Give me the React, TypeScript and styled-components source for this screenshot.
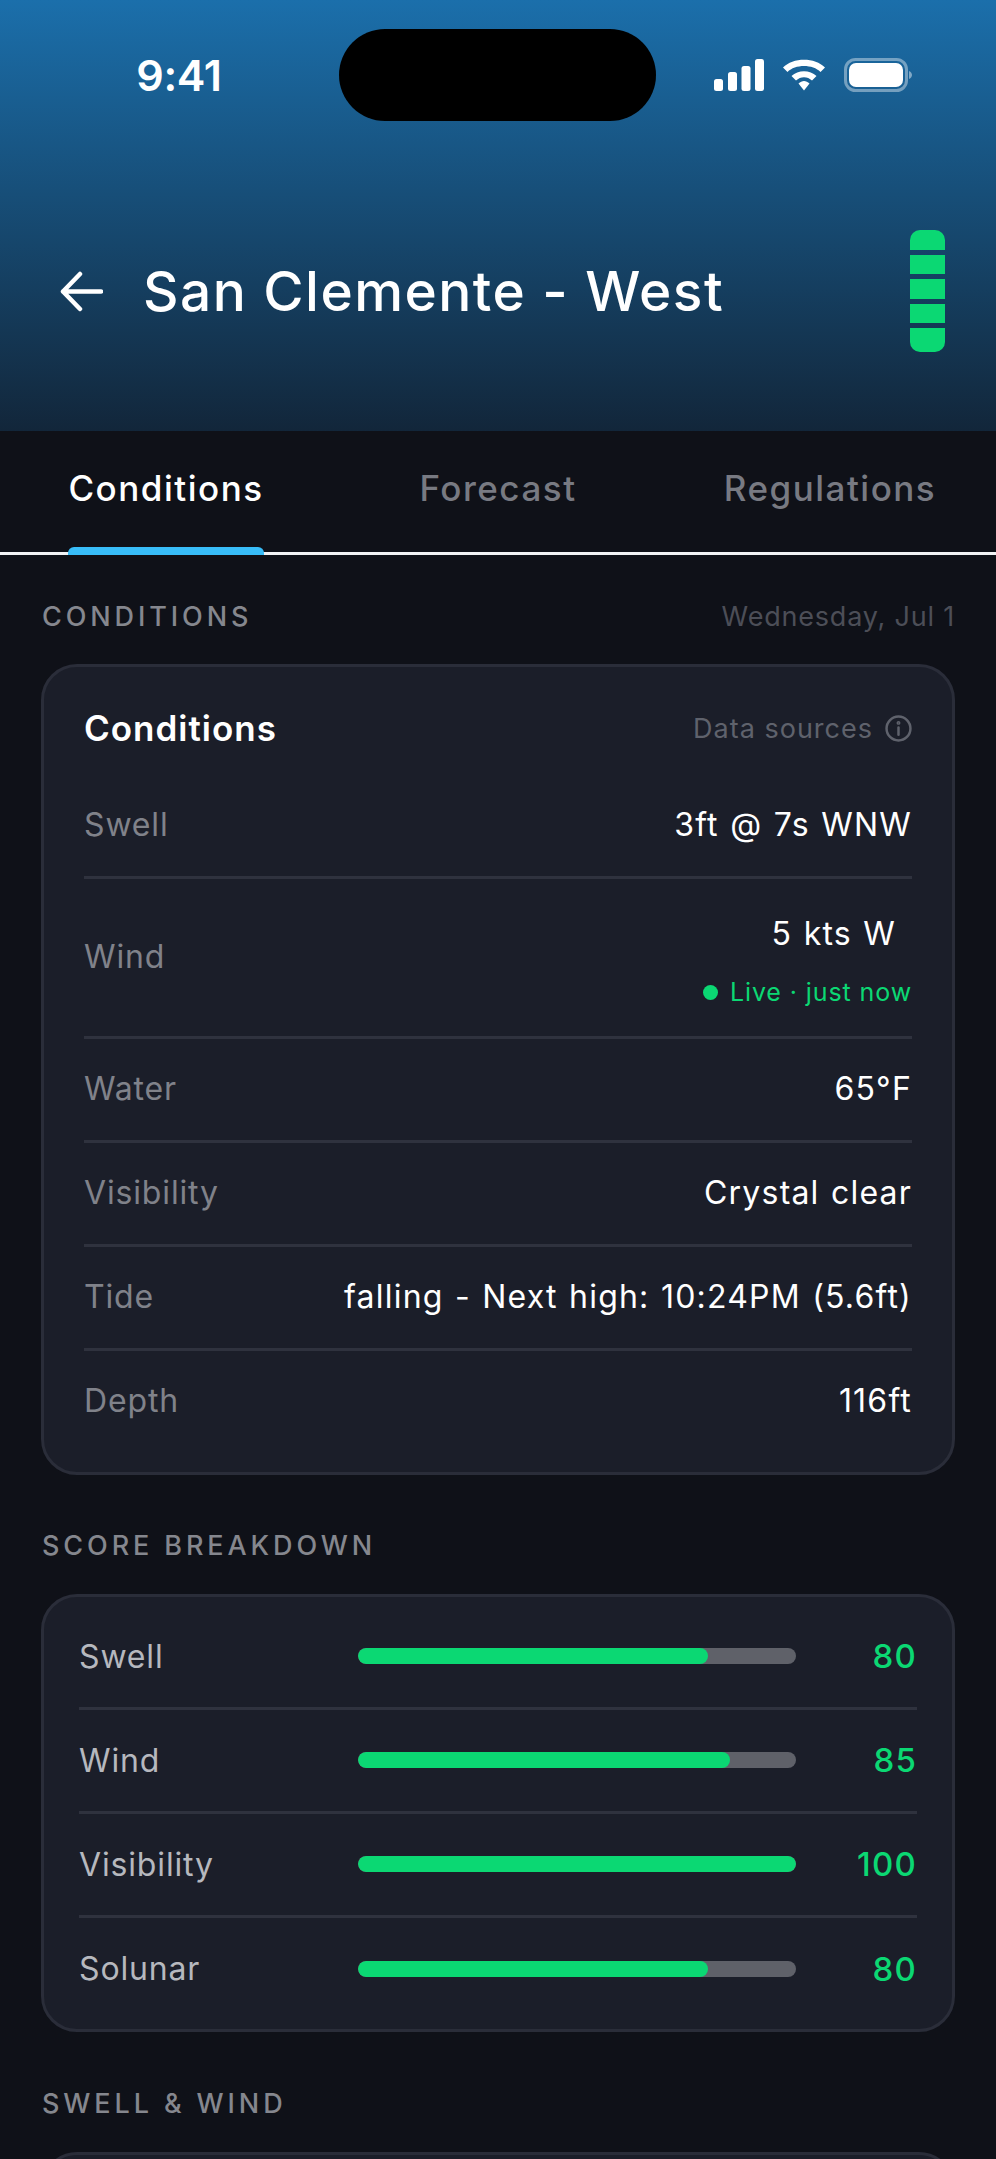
import React from "react";
import styled, { createGlobalStyle } from "styled-components";

const Global = createGlobalStyle`
  html, body { margin: 0; padding: 0; background: #0f1118; }
  * { box-sizing: border-box; }
  #root { height: 2159px; overflow: hidden; }
`;

const Page = styled.div`
  width: 996px;
  height: 2159px;
  overflow: hidden;
  background: #0f1118;
  font-family: Inter, "Liberation Sans", sans-serif;
  color: #fff;
`;

const Header = styled.header`
  height: 431px;
  padding-top: 29px;
  background: linear-gradient(180deg, #1b6fab 0%, #12263a 100%);
  display: flex;
  flex-direction: column;
`;

const StatusBar = styled.div`
  display: grid;
  grid-template-columns: 339px 317px 1fr;
  align-items: center;
  height: 92px;
`;

const Clock = styled.div`
  padding-left: 19px;
  text-align: center;
  font-size: 43px;
  font-weight: 600;
  letter-spacing: -0.3px;
`;

const Island = styled.div`
  height: 92px;
  background: #000;
  border-radius: 46px;
`;

const StatusIcons = styled.div`
  display: flex;
  align-items: center;
  padding-left: 58px;
`;

const TitleRow = styled.div`
  margin-top: 109px;
  height: 122px;
  display: flex;
  align-items: center;
  padding: 0 51px 0 60px;
`;

const BackIcon = styled.svg`
  width: 43px;
  height: 41px;
  margin-right: 40px;
  flex: none;
`;

const Title = styled.h1`
  flex: 1;
  margin: 0;
  font-size: 55px;
  font-weight: 530;
  letter-spacing: 1.45px;
`;

const ScorePill = styled.div`
  width: 35px;
  height: 122px;
  display: grid;
  grid-template-rows: 19.5px 19.5px 19.5px 19.5px 24px;
  row-gap: 5px;
  border-radius: 10px;
  overflow: hidden;
`;

const PillSegment = styled.div`
  background: #0bd873;
`;

const Tabs = styled.nav`
  height: 124px;
  display: grid;
  grid-template-columns: repeat(3, 1fr);
  border-bottom: 3px solid #f2f3f5;
  background: #0f1118;
`;

const Tab = styled.div<{ $active?: boolean }>`
  position: relative;
  justify-self: center;
  align-self: stretch;
  display: flex;
  align-items: center;
  padding-bottom: 7px;
  font-size: 35px;
  font-weight: 500;
  letter-spacing: 1.5px;
  color: ${(p) => (p.$active ? "#ffffff" : "#787a82")};

  &::after {
    content: "";
    display: ${(p) => (p.$active ? "block" : "none")};
    position: absolute;
    left: 0;
    right: 0;
    bottom: -3px;
    height: 8px;
    border-radius: 6px 6px 0 0;
    background: #38bdf8;
  }
`;

const Content = styled.main`
  padding: 0 41px;
`;

const SectionHead = styled.div<{ $h: number; $top: number }>`
  display: flex;
  justify-content: space-between;
  align-items: center;
  height: ${(p) => p.$h}px;
  padding-top: ${(p) => p.$top}px;
`;

const SectionLabel = styled.h2`
  margin: 0 0 0 1px;
  font-size: 27px;
  font-weight: 500;
  letter-spacing: 3.9px;
  color: #85878e;
`;

const SectionDate = styled.span`
  font-size: 27px;
  color: #4c4e57;
  letter-spacing: 0.8px;
`;

const Card = styled.section`
  background: #1b1e29;
  border: 3px solid #2a2d39;
  border-radius: 36px;
`;

const ConditionsCard = styled(Card)`
  height: 811px;
  padding: 0 40px;
`;

const ConditionsTop = styled.div`
  height: 108px;
  padding-top: 14px;
  display: flex;
  justify-content: space-between;
  align-items: center;
`;

const CardTitle = styled.h3`
  margin: 0;
  font-size: 35px;
  font-weight: 600;
  letter-spacing: 1px;
`;

const SourcesLink = styled.div`
  display: flex;
  align-items: center;
  gap: 12px;
  font-size: 27px;
  letter-spacing: 1px;
  color: #5f626c;
`;

const DataRow = styled.div<{ $tall?: boolean; $last?: boolean }>`
  display: flex;
  align-items: center;
  justify-content: space-between;
  height: ${(p) => (p.$tall ? 160 : 104)}px;
  padding-bottom: ${(p) => (p.$last ? 5 : 2)}px;
  border-bottom: ${(p) => (p.$last ? "none" : "3px solid #2f323e")};
`;

const RowLabel = styled.span`
  font-size: 32px;
  letter-spacing: 0.85px;
  color: #80828a;
`;

const RowValue = styled.span`
  font-size: 32px;
  font-weight: 420;
  letter-spacing: 1.2px;
  word-spacing: 1.2px;
  color: #fff;
`;

const ValueStack = styled.div`
  display: flex;
  flex-direction: column;
  align-items: flex-end;
  gap: 24px;
  margin-top: 8px;
`;

const WindValue = styled(RowValue)`
  padding-right: 16px;
`;

const LiveLine = styled.div`
  display: flex;
  align-items: center;
  gap: 12px;
  font-size: 25px;
  letter-spacing: 0.9px;
  color: #0bd873;
`;

const LiveDot = styled.span`
  width: 15px;
  height: 15px;
  border-radius: 50%;
  background: #0bd873;
`;

const ScoreCard = styled(Card)`
  height: 438px;
  padding: 9px 35px 0;
`;

const ScoreRow = styled.div<{ $last?: boolean }>`
  display: grid;
  grid-template-columns: 279px 438px 1fr;
  align-items: center;
  height: 104px;
  padding-bottom: ${(p) => (p.$last ? 3 : 1)}px;
  border-bottom: ${(p) => (p.$last ? "none" : "3px solid #2f323e")};
`;

const ScoreLabel = styled.span`
  font-size: 32px;
  letter-spacing: 0.85px;
  color: #b6b8be;
`;

const Track = styled.div`
  height: 16px;
  border-radius: 8px;
  background: #5f6169;
  overflow: hidden;
`;

const Fill = styled.div`
  height: 100%;
  border-radius: 8px;
  background: #0bd873;
`;

const ScoreValue = styled.span`
  text-align: right;
  font-size: 33px;
  font-weight: 500;
  letter-spacing: 1.2px;
  color: #0bd873;
`;

const NextCard = styled(Card)`
  height: 200px;
`;

const conditions = [
  ["Water", "65°F"],
  ["Visibility", "Crystal clear"],
  ["Tide", "falling - Next high: 10:24PM (5.6ft)"],
];

const scores = [
  { label: "Swell", value: 80 },
  { label: "Wind", value: 85 },
  { label: "Visibility", value: 100 },
  { label: "Solunar", value: 80 },
];

export default function App() {
  return (
    <Page>
      <Global />
      <Header>
        <StatusBar>
          <Clock>9:41</Clock>
          <Island />
          <StatusIcons>
            <svg width="199" height="34" viewBox="0 0 199 34" fill="#fff">
              <rect x="0" y="21" width="9" height="12" rx="2.5" />
              <rect x="14" y="14" width="9" height="19" rx="2.5" />
              <rect x="27.5" y="8" width="9" height="25" rx="2.5" />
              <rect x="41" y="1" width="9" height="32" rx="2.5" />
              <path d="M69 9.5C79 -1 101 -1 111 9.5L106.5 14C99 6 81 6 73.5 14Z" />
              <path d="M77.5 18C84 11.5 96 11.5 102.5 18L98 22.5C93.5 18 86.5 18 82 22.5Z" />
              <path d="M84.5 25.5C88 22 92 22 95.5 25.5L90 32.5Z" />
              <rect x="131.5" y="1.5" width="61" height="31" rx="10" fill="none" stroke="#fff" strokeOpacity="0.4" strokeWidth="3" />
              <rect x="135" y="5" width="54" height="24" rx="7" />
              <path d="M195 13C197 14 198 15.5 198 17C198 18.5 197 20 195 21Z" fill="#fff" fillOpacity="0.45" />
            </svg>
          </StatusIcons>
        </StatusBar>
        <TitleRow>
          <BackIcon viewBox="0 0 43 41" fill="none" stroke="#fff" strokeWidth="4.5" strokeLinecap="round" strokeLinejoin="round">
            <path d="M41 20.5H3M20 3L3 20.5L20 38" />
          </BackIcon>
          <Title>San Clemente - West</Title>
          <ScorePill>
            {[0, 1, 2, 3, 4].map((i) => (
              <PillSegment key={i} />
            ))}
          </ScorePill>
        </TitleRow>
      </Header>

      <Tabs>
        <Tab $active>Conditions</Tab>
        <Tab>Forecast</Tab>
        <Tab>Regulations</Tab>
      </Tabs>

      <Content>
        <SectionHead $h={109} $top={14}>
          <SectionLabel>CONDITIONS</SectionLabel>
          <SectionDate>Wednesday, Jul 1</SectionDate>
        </SectionHead>

        <ConditionsCard>
          <ConditionsTop>
            <CardTitle>Conditions</CardTitle>
            <SourcesLink>
              Data sources
              <svg width="27" height="27" viewBox="0 0 26 26" fill="none" stroke="#5f626c" strokeWidth="2.4" strokeLinecap="round">
                <circle cx="13" cy="13" r="11.5" />
                <path d="M13 12V19" />
                <circle cx="13" cy="7.6" r="0.7" fill="#5f626c" />
              </svg>
            </SourcesLink>
          </ConditionsTop>
          <DataRow>
            <RowLabel>Swell</RowLabel>
            <RowValue>3ft @ 7s WNW</RowValue>
          </DataRow>
          <DataRow $tall>
            <RowLabel>Wind</RowLabel>
            <ValueStack>
              <WindValue>5 kts W</WindValue>
              <LiveLine>
                <LiveDot />
                Live · just now
              </LiveLine>
            </ValueStack>
          </DataRow>
          {conditions.map(([label, value]) => (
            <DataRow key={label}>
              <RowLabel>{label}</RowLabel>
              <RowValue>{value}</RowValue>
            </DataRow>
          ))}
          <DataRow $last>
            <RowLabel>Depth</RowLabel>
            <RowValue>116ft</RowValue>
          </DataRow>
        </ConditionsCard>

        <SectionHead $h={119} $top={22}>
          <SectionLabel>SCORE BREAKDOWN</SectionLabel>
        </SectionHead>

        <ScoreCard>
          {scores.map((s, i) => (
            <ScoreRow key={s.label} $last={i === scores.length - 1}>
              <ScoreLabel>{s.label}</ScoreLabel>
              <Track>
                <Fill style={{ width: `${s.value}%` }} />
              </Track>
              <ScoreValue>{s.value}</ScoreValue>
            </ScoreRow>
          ))}
        </ScoreCard>

        <SectionHead $h={120} $top={22}>
          <SectionLabel>SWELL &amp; WIND</SectionLabel>
        </SectionHead>

        <NextCard />
      </Content>
    </Page>
  );
}
